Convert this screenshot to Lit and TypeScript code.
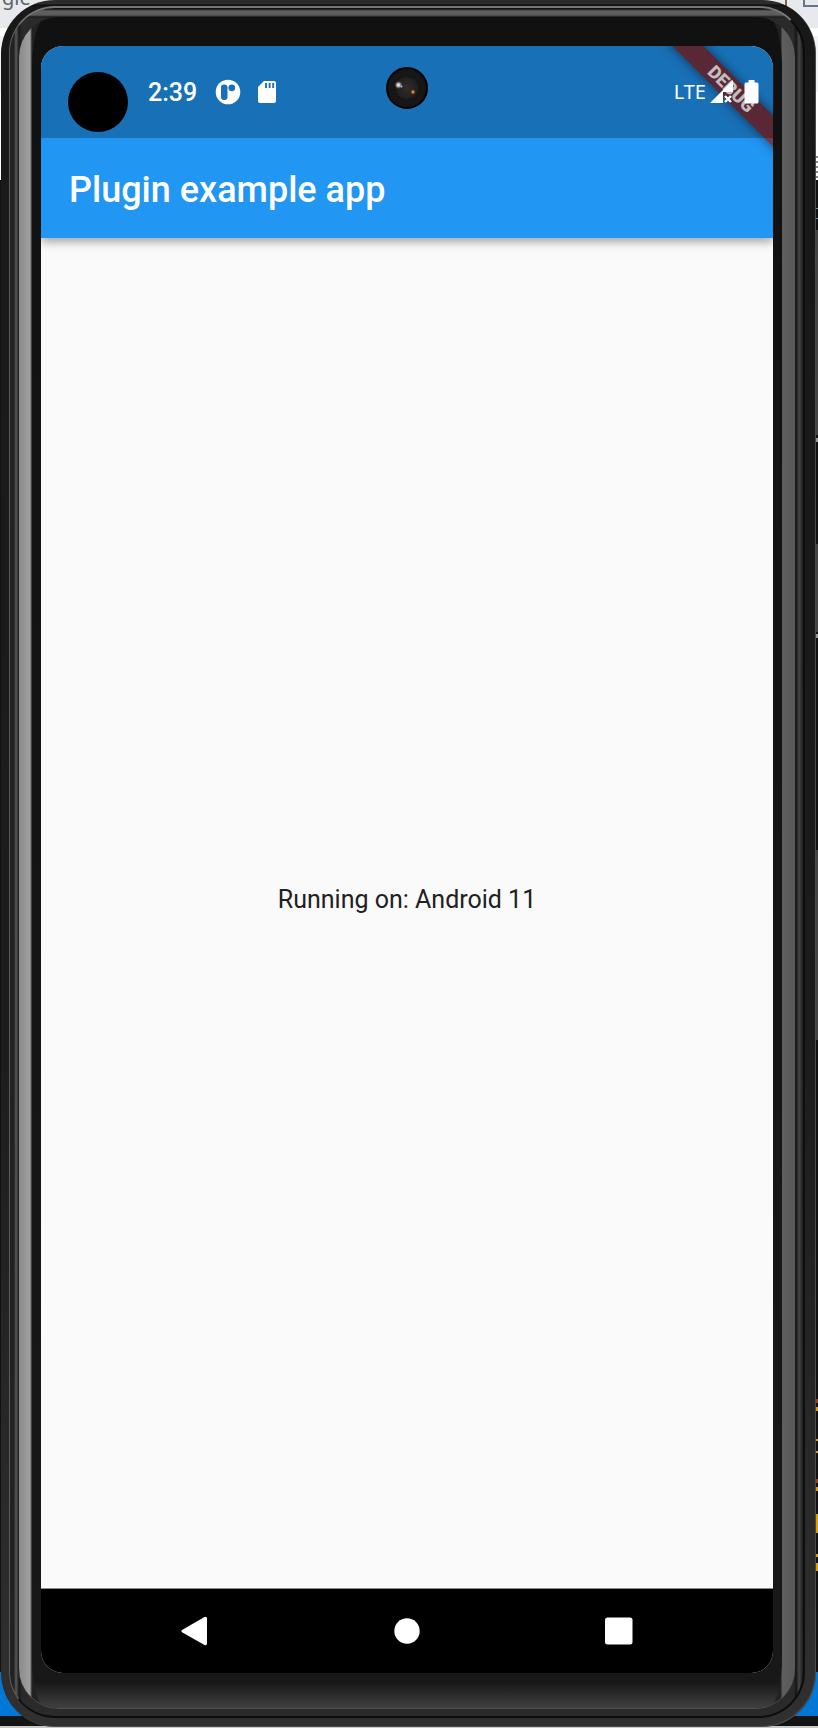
import { LitElement, html, css, svg } from "lit";
import { customElement, property } from "lit/decorators.js";

@customElement("status-bar")
class StatusBar extends LitElement {
  @property() time = "";
  @property() network = "";

  static styles = css`
    :host {
      box-sizing: border-box;
      display: flex;
      align-items: center;
      justify-content: space-between;
      height: 92px;
      padding: 0 14px 0 107px;
      background: rgba(0, 0, 0, 0.25);
      color: #fff;
    }
    .group { display: flex; align-items: center; }
    .time { padding-top: 2px; font-size: 25px; font-weight: 500; line-height: 30px; margin-right: 18px; }
    .network { font-family: "Noto Sans", sans-serif; font-size: 20px; font-weight: 400; line-height: 28px; margin-right: 4px; }
    svg { display: block; }
    .patch { margin-right: 16px; }
    .signal { margin-right: 10px; }
  `;

  render() {
    return html`
      <div class="group">
        <span class="time">${this.time}</span>
        <svg class="patch" width="26" height="26" viewBox="0 0 26 26">
          <circle cx="13" cy="13" r="12.3" fill="#fff" />
          <rect x="6" y="5.500" width="6.500" height="15.500" rx="3" fill="#1970b6" />
          <circle cx="16.800" cy="8.800" r="3.400" fill="#1970b6" />
        </svg>
        <svg width="20" height="24" viewBox="0 0 20 24">
          <path d="M7 1h10a2 2 0 0 1 2 2v18a2 2 0 0 1-2 2H3a2 2 0 0 1-2-2V7z" fill="#fff" />
          <path d="M9 3v5M12.600 3v5M16.200 3v5" stroke="#1970b6" stroke-width="1.900" />
        </svg>
      </div>
      <div class="group">
        <span class="network">${this.network}</span>
        <svg class="signal" width="24" height="24" viewBox="0 0 24 24">
          <path d="M0 23L23 0v12H13v11z" fill="#fff" />
          <path d="M15 16l6 6M21 16l-6 6" stroke="#fff" stroke-width="2.400" />
        </svg>
        <svg width="15" height="24" viewBox="0 0 15 24">
          <path d="M4.500 0h6v2.500H13a1.500 1.500 0 0 1 1.500 1.500v18a1.500 1.500 0 0 1-1.500 1.500H2a1.500 1.500 0 0 1-1.500-1.500V4A1.500 1.500 0 0 1 2 2.500h2.500z" fill="#fff" />
        </svg>
      </div>
    `;
  }
}

@customElement("nav-bar")
class NavBar extends LitElement {
  static styles = css`
    :host {
      display: grid;
      grid-template-columns: repeat(3, 29%);
      justify-content: center;
      height: 85px;
      background: #000;
      border-top: 1px solid #8c8c8c;
    }
    button {
      display: grid;
      place-items: center;
      padding: 0;
      border: 0;
      background: none;
    }
    svg { display: block; }
  `;

  private item(label: string, shape: unknown) {
    return html`<button type="button" aria-label=${label}>
      <svg width="30" height="30" viewBox="0 0 30 30" fill="#fff">${shape}</svg>
    </button>`;
  }

  render() {
    return html`
      ${this.item("Back", svg`<path d="M2 14L24.500 1Q27 0 27 2.500v25Q27 30 24.500 29L2 16.200Q.5 15 2 14z" />`)}
      ${this.item("Home", svg`<circle cx="15" cy="15" r="12.700" />`)}
      ${this.item("Overview", svg`<rect x="1" y="1.500" width="27.500" height="27" rx="2.500" />`)}
    `;
  }
}

@customElement("desktop-backdrop")
class DesktopBackdrop extends LitElement {
  static styles = css`
    :host {
      display: flex;
      justify-content: space-between;
      overflow: hidden;
      background:
        linear-gradient(#c9c9c9, #c9c9c9) bottom / 100% 2px no-repeat,
        linear-gradient(#141414, #141414) bottom / 100% 12px no-repeat,
        linear-gradient(#0078d7, #0078d7) bottom / 100% 56px no-repeat,
        linear-gradient(#e8e9ed 28px, #fff 28px 36px, #f1f3f4 36px 92px, #fff 92px 180px, #111 180px);
    }
    .tab {
      height: 10px;
      margin-top: -14px;
      padding-left: 2px;
      font: 20px/24px "Noto Sans", sans-serif;
      color: #5f6368;
    }
    svg { display: block; }
  `;

  render() {
    return html`
      <span class="tab">gle</span>
      <svg width="44" height="1600" viewBox="0 0 44 1600" fill="none">
        <path d="M12 0v7" stroke="#80634f" stroke-width="2" />
        <path d="M30 0v6h14" stroke="#65728b" stroke-width="2" />
        <path d="M43 156v22" stroke="#888" stroke-width="2" stroke-dasharray="2 3" />
        <path d="M43 208v1M43 218v1" stroke="#71839a" stroke-width="2" />
        <path d="M43 230v205M43 544v88M43 850v190" stroke="#777" stroke-width="1" />
        <path d="M40 440h4M40 636h4" stroke="#999" stroke-width="4" />
        <path d="M43 1399v4M43 1479v4" stroke="#94401c" stroke-width="2" />
        <path d="M43 1407v4M43 1439v2M43 1451v2M43 1487v4M43 1514v19M43 1554v3M43 1563v8" stroke="#d6a000" stroke-width="2" />
      </svg>
    `;
  }
}

@customElement("app-root")
class AppRoot extends LitElement {
  static styles = css`
    :host {
      display: grid;
      grid-template: minmax(100vh, auto) / 100%;
      font-family: Roboto, sans-serif;
    }
    * { box-sizing: border-box; }
    desktop-backdrop, .case { grid-area: 1 / 1; }

    /* Hardware shell, from the outer edge inwards */
    .case {
      display: grid;
      z-index: 1;
      margin: 0 2px 1px 1px;
      padding: 6px 11px 9px 8px;
      border-radius: 54px;
      background:
        linear-gradient(#2c2c2c 4px, #0c0c0c 5px, transparent 6px),
        linear-gradient(#181818, #1c1c1c 60%, #303030);
      box-shadow: inset -1px -1px 0 #4c4c4c;
    }
    .rim {
      display: grid;
      padding: 9px 8px 7px 9px;
      border-radius: 46px;
      border-top: 2px solid #777;
      border-left: 1px solid #5a5a5a;
      border-right: 2px solid #0d0d0d;
      border-bottom: 2px solid #0d0d0d;
      background: linear-gradient(#111 1px, #606060 3px, #5c5c5c 7px, #181818 9px, transparent 10px),
        linear-gradient(to right, #222 0 4px, #5a5a5a 6px, #1a1a1a 9px, #2a2a2a 12px calc(100% - 9px), #141414 calc(100% - 7px), #454545 calc(100% - 4px), #1c1c1c);
    }
    .bezel {
      display: grid;
      overflow: hidden;
      padding: 0 13px;
      border-radius: 40px;
      border-bottom: 1px solid #505050;
      background: linear-gradient(to right, #8a8a8a, #a0a0a0 11px, #222 13px, #222 calc(100% - 14px), #5e5e5e calc(100% - 13px), #585858 calc(100% - 1px));
    }
    .glass {
      display: grid;
      padding: 29px 9px 35px;
      border-radius: 14px / 52px;
      background: linear-gradient(#0000 calc(100% - 26px), #404040), linear-gradient(#111, #181818);
    }
    .screen {
      position: relative;
      display: flex;
      flex-direction: column;
      overflow: hidden;
      border-radius: 22px;
      background: #fafafa;
    }
    .header {
      z-index: 0;
      background: #2196f3;
      box-shadow: 0 4px 9px rgba(0, 0, 0, 0.35);
    }
    status-bar { position: relative; z-index: 2; }
    h1 {
      margin: 0;
      padding: 4px 28px 0;
      font-size: 36px;
      font-weight: 500;
      line-height: 96px;
      color: #fff;
    }
    main {
      flex: 1;
      display: grid;
      place-items: center;
      padding: 24px 24px 50px;
      font-size: 25px;
      line-height: 30px;
      color: #212121;
    }
    main p { margin: 0; }

    /* Overlays on the display */
    .banner {
      position: absolute;
      z-index: 1;
      top: 32px;
      right: -38px;
      width: 160px;
      height: 22px;
      transform: rotate(45deg);
      background: #793549;
      box-shadow: 0 0 11px rgba(0, 0, 0, 0.5);
      color: #fff;
      font-size: 18px;
      font-weight: 900;
      line-height: 22px;
      text-align: center;
    }
    .punch {
      position: absolute;
      z-index: 3;
      top: 26px;
      left: 27px;
      width: 60px;
      height: 60px;
      border-radius: 50%;
      background: #000;
    }
    .lens {
      position: absolute;
      z-index: 3;
      top: 21px;
      left: 50%;
      margin-left: -21px;
    }
  `;

  render() {
    return html`
      <desktop-backdrop></desktop-backdrop>
      <div class="case"><div class="rim"><div class="bezel"><div class="glass">
        <div class="screen">
          <header class="header">
            <status-bar time="2:39" network="LTE"></status-bar>
            <h1>Plugin example app</h1>
            <div class="banner">DEBUG</div>
          </header>
          <div class="punch"></div>
          <svg class="lens" width="42" height="42" viewBox="0 0 42 42">
            <defs>
              <radialGradient id="iris">
                <stop offset="0" stop-color="#332b2b" />
                <stop offset="1" stop-color="#211e1f" />
              </radialGradient>
              <radialGradient id="glint">
                <stop offset="0" stop-color="#fff" />
                <stop offset=".4" stop-color="#b9b9b0" />
                <stop offset="1" stop-color="#777" stop-opacity="0" />
              </radialGradient>
            </defs>
            <circle cx="21" cy="21" r="20" fill="#161616" stroke="#000" stroke-width="2" />
            <circle cx="21" cy="21" r="11" fill="url(#iris)" />
            <circle cx="12.500" cy="18" r="4" fill="url(#glint)" />
            <circle cx="15.500" cy="19.500" r="1" fill="#c9a4d0" />
            <circle cx="27" cy="25" r="2.300" fill="#7d4a1e" />
            <circle cx="27" cy="25" r="1" fill="#f3b060" />
          </svg>
          <main><p>Running on: Android 11</p></main>
          <nav-bar></nav-bar>
        </div>
      </div></div></div></div>
    `;
  }
}
